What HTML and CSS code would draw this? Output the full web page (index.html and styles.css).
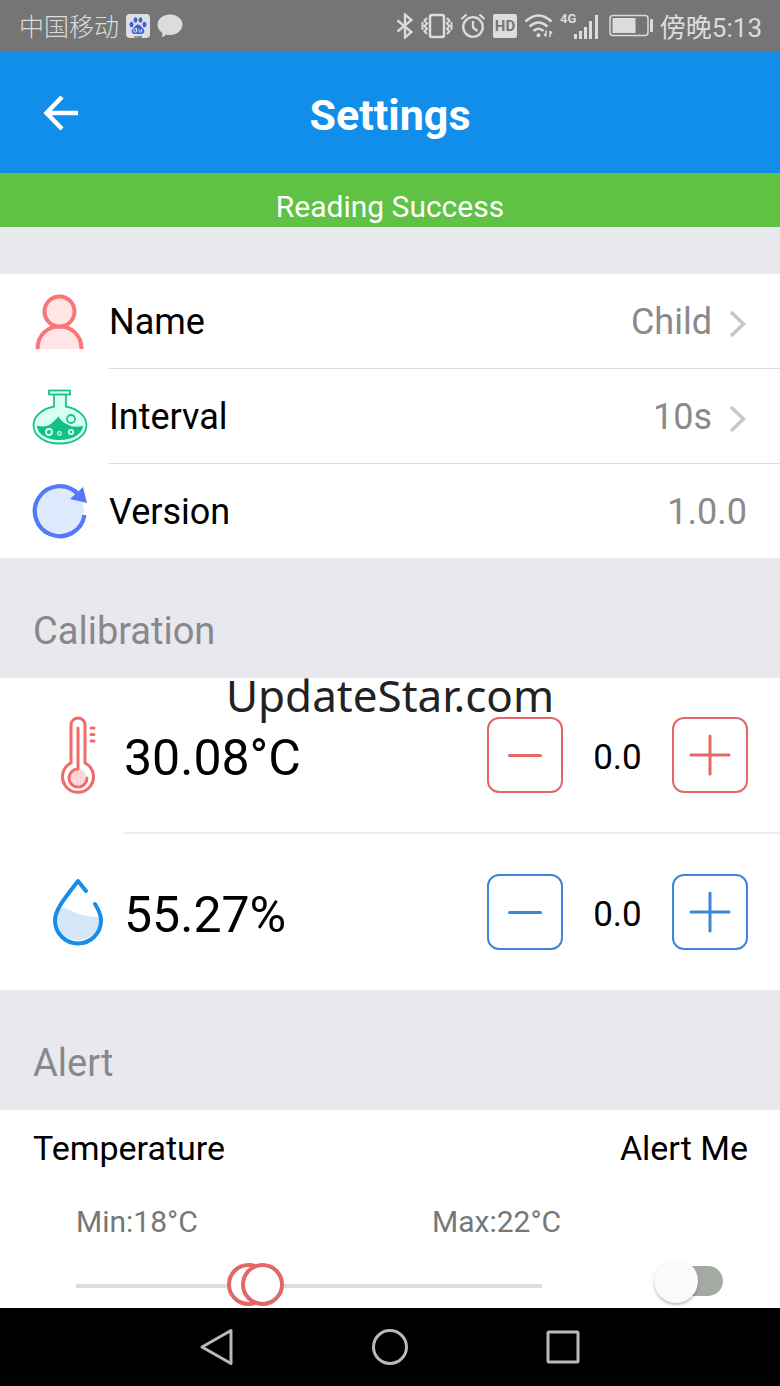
FILE: index.html
```html
<!DOCTYPE html>
<html lang="en">
<head>
<meta charset="utf-8">
<meta name="viewport" content="width=device-width, initial-scale=1">
<title>Settings</title>
<link rel="stylesheet" href="styles.css">
</head>
<body>
<div class="statusbar">
  <div class="status-group">
    <span class="carrier" lang="zh">中国移动</span>
    <svg class="baidu" width="24" height="24" viewBox="0 0 24 24" aria-hidden="true">
      <rect width="24" height="24" rx="4" fill="#dedfe3"/>
      <g fill="#3f63d6">
        <ellipse cx="5.500" cy="10.500" rx="2" ry="2.700"/>
        <ellipse cx="9.500" cy="6" rx="2" ry="2.700"/>
        <ellipse cx="14.500" cy="6" rx="2" ry="2.700"/>
        <ellipse cx="18.500" cy="10.500" rx="2" ry="2.700"/>
        <path d="M12 10.500c2 0 3 2 4.500 3.500s2.500 2.500 1.500 4.500-3.500 1.500-6 1.500-5 .5-6-1.500 0-3 1.500-4.500 2.500-3.500 4.500-3.500z"/>
      </g>
      <path d="M10.500 14v4H9a1.500 1.500 0 0 1 0-3h1.500M13 15v2q0 1 1 1h1.500v-3" fill="none" stroke="#dedfe3" stroke-width="1"/>
      <path d="M8 23h4" stroke="#e05a5a" stroke-width="1.500"/><path d="M12 23h4" stroke="#3f63d6" stroke-width="1.500"/>
    </svg>
    <svg class="bubble" width="26" height="24" viewBox="0 0 26 24" aria-hidden="true">
      <path d="M13 .5c7 0 12.500 4.500 12.500 10S20 21 13 21c-1.500 0-2.700-.1-4-.5-1.200 1.300-2.500 2.200-4.500 2.800.8-1.300 1-2.500.9-4.300C2.300 17 .5 14 .5 10.500.5 5 6 .5 13 .5z" fill="#dcdcdc"/>
    </svg>
  </div>
  <div class="status-group">
    <svg width="18" height="26" viewBox="0 0 18 26" fill="none" stroke="#dcdcdc" stroke-width="2.300" aria-hidden="true"><path d="M1.500 7.500 15.500 19 9 24.500V1.500L15.500 7 1.500 18.500"/></svg>
    <svg width="32" height="26" viewBox="0 0 32 26" fill="none" stroke="#dcdcdc" aria-hidden="true"><rect x="9" y="2" width="14" height="22" rx="2" stroke-width="2.500"/><path d="m6 5-2.500 2.700L6 10.400l-2.500 2.700L6 15.800l-2.500 2.700L6 21M1.500 9v8M26 5l2.500 2.700-2.500 2.700 2.500 2.700-2.500 2.700 2.500 2.700L26 21M30.500 9v8" stroke-width="2"/></svg>
    <svg width="26" height="26" viewBox="0 0 26 26" fill="none" stroke="#dcdcdc" stroke-width="2.300" aria-hidden="true"><circle cx="13" cy="14" r="9.800"/><path d="M13 8v6.500l4.500 3.500M1.500 6 6.500 1.500M24.500 6l-5-4.500"/></svg>
    <svg width="24" height="24" viewBox="0 0 24 24" aria-hidden="true"><rect width="24" height="24" rx="2" fill="#dcdcdc"/><text x="12" y="17" text-anchor="middle" class="hd">HD</text></svg>
    <svg width="29" height="26" viewBox="0 0 29 26" fill="none" stroke="#dcdcdc" stroke-width="2.600" aria-hidden="true"><path d="M1.500 8.500Q14.500-3.500 27.500 8.500M5.500 13.500q9-8 18 0M9.500 18q5-4.500 10 0"/><circle cx="14.500" cy="22.200" r="1" stroke-width="2"/><path d="M22 17.500v6M20 21l2 2.500M26 24v-6M28 20.500 26 18" stroke-width="1.500"/></svg>
    <svg width="42" height="30" viewBox="0 0 42 30" fill="none" stroke="#dcdcdc" stroke-width="3" aria-hidden="true"><text x="0" y="12" class="fourg">4G</text><path d="M15.500 28v-5M20.500 28v-8M25.500 28V16M30.500 28V10M36.500 28V4"/></svg>
    <svg width="44" height="26" viewBox="0 0 44 26" aria-hidden="true"><rect x="1" y="2.500" width="38" height="20" rx="3" fill="none" stroke="#dcdcdc" stroke-width="1.500"/><rect x="3.500" y="5" width="23" height="15" fill="#dcdcdc"/><rect x="41" y="6" width="3" height="13" rx="1" fill="#dcdcdc"/></svg>
    <span class="clock" lang="zh">傍晚5:13</span>
  </div>
</div>

<header class="appbar">
  <button class="back" type="button" aria-label="Back">
    <svg width="36" height="36" viewBox="0 0 36 36" fill="none" stroke="#fff" stroke-width="4.500"><path d="M35 18H5M19 2 3.500 18 19 34"/></svg>
  </button>
  <h1 class="title">Settings</h1>
</header>
<p class="notice" role="status">Reading Success</p>

<main class="content">
  <section class="panel general">
    <button class="row" type="button">
      <svg class="row-icon" width="56" height="56" viewBox="0 0 56 56" fill="#ffe5e6" stroke="#fb7576" stroke-width="4"><path d="M5.500 55C5.500 25 49.500 25 49.500 55" fill="#ffe5e6"/><circle cx="27.500" cy="17.500" r="15"/></svg>
      <span class="row-body"><span class="row-label">Name</span><span class="row-value">Child</span>
      <svg class="chevron" width="18" height="30" viewBox="0 0 18 30"><path d="m2 3 12.500 12L2 27" fill="none" stroke="#c8c8c8" stroke-width="3.500"/></svg></span>
    </button>
    <button class="row" type="button">
      <svg class="row-icon" width="56" height="56" viewBox="0 0 56 56" fill="none" stroke="#19c38a" stroke-width="1.800">
        <path d="M22 6v11.500C10 20 1.500 27 1.500 36.500 1.500 47 13 54.500 27.500 54.500S54.500 47 54.500 36.500C54.500 27 46 20 34 17.500V6" fill="#d9fff1"/>
        <rect x="17" y="1.500" width="21" height="4" fill="#d9fff1"/>
        <path d="M5 36.500c7 2.500 12 .5 16-3.500 3-2.500 4.500-4 5.500-6 1.500 4 5 6.500 9 8.500 5 2.500 10 3 15.500 1-.5 9-11 14.500-23.500 14.500S5 45 5 36.500z" fill="#14c184" stroke="none"/>
        <circle cx="39" cy="30" r="4" fill="#d9fff1"/>
        <g stroke="#d9fff1"><circle cx="17" cy="43" r="3"/><circle cx="39" cy="43" r="2.200"/><circle cx="27.500" cy="44.500" r="1.800" stroke-width="1.200"/></g>
      </svg>
      <span class="row-body"><span class="row-label">Interval</span><span class="row-value">10s</span>
      <svg class="chevron" width="18" height="30" viewBox="0 0 18 30"><path d="m2 3 12.500 12L2 27" fill="none" stroke="#c8c8c8" stroke-width="3.500"/></svg></span>
    </button>
    <div class="row">
      <svg class="row-icon" width="56" height="56" viewBox="0 0 56 56"><circle cx="28" cy="28.500" r="24" fill="#e0eaff"/><path d="M52.500 32A25 25 0 1 1 46 11" fill="none" stroke="#5279fa" stroke-width="4.200"/><path d="M51 4 55 20 38 16z" fill="#5279fa"/></svg>
      <span class="row-body"><span class="row-label">Version</span><span class="row-value">1.0.0</span></span>
    </div>
  </section>

  <h2 class="section-title">Calibration</h2>
  <section class="panel calibration">
    <div class="watermark">UpdateStar.com</div>
    <div class="cal-row red">
      <svg class="cal-icon" width="56" height="80" viewBox="0 0 56 80" fill="none" stroke="#f16b6b" stroke-width="3" stroke-linecap="round">
        <path d="M21 47V9a7 7 0 0 1 14 0v38a15.500 15.500 0 1 1-14 0z"/><path d="M28 12v41"/><circle cx="28" cy="61" r="8" fill="#ffd5dc" stroke="none"/><path d="M28 53a9 9 0 1 0 9 9"/><path d="M41 12h3M41 18.500h3M41 25h3"/>
      </svg>
      <div class="cal-body">
        <span class="reading">30.08°C</span>
        <button class="step" type="button" aria-label="Decrease temperature offset"><svg width="44" height="44" viewBox="0 0 44 44"><path d="M6.500 22.500h31"/></svg></button>
        <output class="offset">0.0</output>
        <button class="step" type="button" aria-label="Increase temperature offset"><svg width="44" height="44" viewBox="0 0 44 44"><path d="M3 22h38M22 3v38"/></svg></button>
      </div>
    </div>
    <div class="cal-row blue">
      <svg class="cal-icon" width="56" height="80" viewBox="0 0 56 80" fill="none" stroke="#168de9" stroke-width="4" stroke-linecap="round" stroke-linejoin="round">
        <path d="M8 36c12-2 14 9 42 9 0 14-9 23-22 23S5 58 5 46c0-4 1-7 3-10z" fill="#d5e6f8" stroke="none"/>
        <path d="M36 19 28 9C16 25 5 37 5 48.500a22.500 22.500 0 0 0 46 0c0-6-2.500-11-6-16.500"/>
      </svg>
      <div class="cal-body">
        <span class="reading">55.27%</span>
        <button class="step" type="button" aria-label="Decrease humidity offset"><svg width="44" height="44" viewBox="0 0 44 44"><path d="M6.500 22.500h31"/></svg></button>
        <output class="offset">0.0</output>
        <button class="step" type="button" aria-label="Increase humidity offset"><svg width="44" height="44" viewBox="0 0 44 44"><path d="M3 22h38M22 3v38"/></svg></button>
      </div>
    </div>
  </section>

  <h2 class="section-title">Alert</h2>
  <section class="panel alert">
    <div class="alert-head"><span>Temperature</span><label for="alert-me">Alert Me</label></div>
    <div class="alert-body">
      <div class="limits"><label for="min-temp">Min:18°C</label><label for="max-temp">Max:22°C</label></div>
      <div class="alert-controls">
        <div class="range">
          <input id="min-temp" class="slider" type="range" min="-24" max="94" value="18">
          <input id="max-temp" class="slider" type="range" min="-24" max="94" value="22">
        </div>
        <input id="alert-me" class="switch" type="checkbox" role="switch">
      </div>
    </div>
  </section>
</main>

<nav class="navbar">
  <button type="button" aria-label="Back"><svg width="38" height="38" viewBox="0 0 38 38"><path d="M33 2.500v33L4 19z"/></svg></button>
  <button type="button" aria-label="Home"><svg width="38" height="38" viewBox="0 0 38 38"><circle cx="19" cy="19" r="16.500"/></svg></button>
  <button type="button" aria-label="Recent apps"><svg width="38" height="38" viewBox="0 0 38 38"><rect x="4" y="4" width="30" height="30" rx="1"/></svg></button>
</nav>
</body>
</html>
```

FILE: styles.css
```css
* { box-sizing: border-box; }

body {
  margin: 0;
  min-height: 100vh;
  display: flex;
  flex-direction: column;
  background: #e9e8ee;
  color: #000;
  font-family: Roboto, "Noto Sans CJK SC", sans-serif;
}

button {
  margin: 0;
  padding: 0;
  border: 0;
  background: none;
  color: inherit;
  font: inherit;
  text-align: left;
  cursor: pointer;
}

svg { display: block; flex: none; }

.statusbar {
  display: flex;
  justify-content: space-between;
  align-items: center;
  height: 52px;
  padding: 0 18px 0 19px;
  background: #757575;
  color: #dcdcdc;
}
.status-group { display: flex; align-items: center; gap: 7px; }
.carrier { font-size: 25px; font-weight: 300; }
.clock { font-size: 26px; font-weight: 400; }
.carrier, .clock { padding-top: 3px; line-height: 36px; white-space: nowrap; }
.hd { font: 700 15px Roboto, sans-serif; fill: #757575; }
.fourg { font: 700 13px Roboto, sans-serif; fill: #dcdcdc; stroke: none; }

.appbar {
  display: grid;
  grid-template-columns: 84px 1fr 84px;
  align-items: center;
  height: 121px;
  background: #118eea;
  color: #fff;
}
.back { padding-left: 43px; }
.title {
  margin: 4px 0 0;
  text-align: center;
  font-size: 43px;
  line-height: 52px;
  font-weight: 700;
}
.notice {
  margin: 0;
  padding: 14px 0 0;
  background: #5fc244;
  color: #fff;
  text-align: center;
  font-size: 30px;
  line-height: 40px;
}

.content { flex: 1; }
.panel { background: #fff; }
.general { margin-top: 47px; }

.row {
  display: flex;
  align-items: center;
  gap: 21px;
  width: 100%;
  height: 95px;
  padding-left: 32px;
}
.row-body {
  flex: 1;
  display: flex;
  align-items: center;
  height: 100%;
  padding: 2px 33px 0 0;
  border-bottom: 1px solid #dcdcdc;
  font-size: 36px;
  line-height: 44px;
}
.row:last-child { height: 94px; }
.row:last-child .row-body { border-bottom: 0; }
.row-label { flex: 1; }
.row-value { color: #8a8a8a; }
.chevron { margin: 4px 0 0 17px; }

.section-title {
  margin: 0;
  padding: 49px 33px 23px;
  color: #88888c;
  font-size: 38px;
  line-height: 48px;
  font-weight: 400;
}

.calibration { position: relative; }
.watermark {
  position: absolute;
  top: -13px;
  left: 0;
  right: 0;
  text-align: center;
  color: #222;
  font-family: "Noto Sans", sans-serif;
  font-size: 44px;
  line-height: 60px;
  pointer-events: none;
}
.cal-row {
  display: flex;
  align-items: center;
  gap: 18px;
  height: 156px;
  padding-left: 50px;
}
.cal-body {
  flex: 1;
  display: flex;
  align-items: center;
  height: 100%;
  padding-right: 32px;
}
.red .cal-body { border-bottom: 2px solid #ececec; }
.red { color: #e36767; }
.blue { color: #3e86d8; }
.reading { flex: 1; padding-top: 6px; color: #000; font-size: 50px; line-height: 60px; }
.offset {
  width: 109px;
  padding-top: 6px;
  color: #000;
  text-align: center;
  font-size: 35px;
  line-height: 40px;
}
.step {
  display: grid;
  place-items: center;
  width: 76px;
  height: 76px;
  border: 2px solid currentColor;
  border-radius: 12px;
}
.step path { fill: none; stroke: currentColor; stroke-width: 3; stroke-linecap: round; }

.alert-head {
  display: flex;
  justify-content: space-between;
  padding: 16px 32px 0 33px;
  font-size: 34px;
  line-height: 44px;
}
.alert-body { padding: 32px 57px 2px 76px; }
.limits {
  display: grid;
  grid-template-columns: 356px 1fr;
  color: #777;
  font-size: 30px;
  line-height: 40px;
}
.alert-controls {
  display: flex;
  align-items: center;
  justify-content: space-between;
  gap: 119px;
  padding-top: 20px;
}
.range {
  flex: 1;
  display: grid;
  align-items: center;
  height: 44px;
  background: linear-gradient(#dcdcdc, #dcdcdc) 0 22px / 100% 4px no-repeat;
}
.slider {
  grid-area: 1 / 1;
  width: 100%;
  height: 43px;
  margin: 0;
  appearance: none;
  background: none;
  pointer-events: none;
}
.slider::-webkit-slider-thumb {
  appearance: none;
  width: 43px;
  height: 43px;
  border: 4px solid #e36767;
  border-radius: 50%;
  background: #fff;
  pointer-events: auto;
}
.switch {
  position: relative;
  appearance: none;
  width: 62px;
  height: 30px;
  margin: 0 0 6px;
  border-radius: 15px;
  background: #a4a9a4;
}
.switch::before {
  content: "";
  position: absolute;
  top: -7px;
  left: -7px;
  width: 44px;
  height: 44px;
  border-radius: 50%;
  background: #fafafa;
  box-shadow: 0 2px 3px rgba(0, 0, 0, .25);
}
.switch:checked::before { left: 25px; }

.navbar {
  display: flex;
  justify-content: center;
  align-items: center;
  gap: 135px;
  height: 78px;
  background: #000;
}
.navbar path, .navbar circle, .navbar rect {
  fill: none;
  stroke: #b9b9b9;
  stroke-width: 3;
  stroke-linejoin: round;
}
```
